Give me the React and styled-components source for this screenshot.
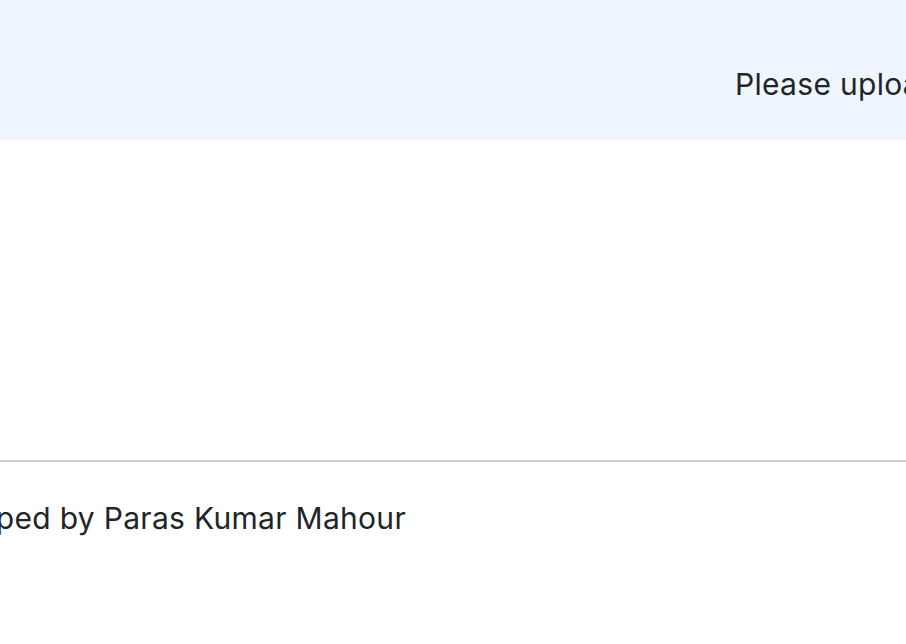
import styled, { createGlobalStyle } from "styled-components";

const GlobalStyle = createGlobalStyle`
  body {
    margin: 0;
    overflow: hidden;
    background: #ffffff;
    color: #212529;
    font-family: Inter, "Noto Sans", "Liberation Sans", sans-serif;
  }
`;

const Page = styled.div`
  width: 906px;
  min-height: 644px;
  display: flex;
  flex-direction: column;
`;

const Banner = styled.header`
  height: 140px;
  box-sizing: border-box;
  background: #eff6ff;
  padding: 66px 0 0 735px;
  overflow: hidden;
  white-space: nowrap;
`;

const BannerText = styled.p`
  margin: 0;
  font-size: 30px;
  line-height: 36px;
  letter-spacing: 0.3px;
`;

const Main = styled.main`
  height: 320px;
`;

const Footer = styled.footer`
  border-top: 2px solid #cfcfcf;
  padding-top: 38px;
`;

const FooterLine = styled.div`
  width: 406px;
  display: flex;
  justify-content: flex-end;
  overflow: hidden;
  white-space: nowrap;
`;

const FooterText = styled.p`
  margin: 0;
  font-size: 30px;
  line-height: 36px;
  letter-spacing: 0.3px;
  flex-shrink: 0;
`;

const App = () => {
  return (
    <>
      <GlobalStyle />
      <Page>
        <Banner>
          <BannerText>Please upload your image to get started</BannerText>
        </Banner>
        <Main />
        <Footer>
          <FooterLine>
            <FooterText>Developed by Paras Kumar Mahour</FooterText>
          </FooterLine>
        </Footer>
      </Page>
    </>
  );
};

export default App;
